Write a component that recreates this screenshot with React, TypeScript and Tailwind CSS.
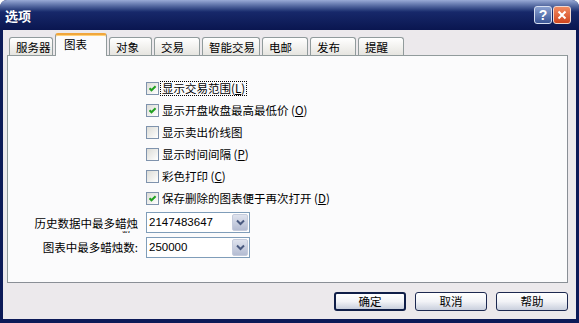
import React from "react";

function Tab({ label, className, active }: { label: string; className: string; active?: boolean }) {
  if (active) {
    return (
      <div
        className={`relative z-10 mb-[-1px] h-[23px] rounded-t-[3px] border border-b-0 border-[#919b9c] border-t-[2px] border-t-[#f0a63c] bg-[#fbfbfc] pl-[8px] pt-[1px] text-[11.5px] leading-[16px] text-black shadow-[inset_0_1px_0_#ffd27a] ${className}`}
      >
        {label}
      </div>
    );
  }
  return (
    <div
      className={`h-[18px] rounded-t-[3px] border border-b-0 border-[#919b9c] bg-gradient-to-b from-white to-[#e6e5e0] pl-[6px] pt-[1px] text-[11.5px] leading-[16px] text-black ${className}`}
    >
      {label}
    </div>
  );
}

function Check({ checked }: { checked?: boolean }) {
  return (
    <div className="flex h-[13px] w-[13px] shrink-0 items-center justify-center border border-[#7f93ad] bg-gradient-to-br from-[#dcdcd7] to-white">
      {checked && (
        <svg width="11" height="11" viewBox="0 0 11 11">
          <path d="M2.5 5.2 L4.5 7.3 L8.6 3.2" fill="none" stroke="#21a121" strokeWidth="2" />
        </svg>
      )}
    </div>
  );
}

function Row({ checked, children, focus }: { checked?: boolean; children: React.ReactNode; focus?: boolean }) {
  return (
    <div className="flex h-[22px] items-center">
      <Check checked={checked} />
      <div
        className={`ml-[2px] px-[1px] text-[11.5px] leading-[13px] text-black ${
          focus ? "outline-1 outline-dotted outline-black" : ""
        }`}
      >
        {children}
      </div>
    </div>
  );
}

function Combo({ value }: { value: string }) {
  return (
    <div className="ml-[8px] flex h-[21px] w-[104px] items-center border border-[#7f9db9] bg-white">
      <div className="flex-1 pl-[2px] text-[11.5px] leading-[13px] text-black font-['Liberation_Sans',sans-serif]">{value}</div>
      <div className="mr-[1px] flex h-[17px] w-[16px] items-center justify-center rounded-[2px] border border-[#c4cbdc] bg-gradient-to-b from-[#dfe3ee] to-[#b4bcd2]">
        <svg width="9" height="7" viewBox="0 0 9 7">
          <path d="M1 1.5 L4.5 5 L8 1.5" fill="none" stroke="#4a5a80" strokeWidth="2" />
        </svg>
      </div>
    </div>
  );
}

function Btn({ label, def }: { label: string; def?: boolean }) {
  return (
    <div
      className={`flex h-[19px] w-[72px] items-center justify-center rounded-[3px] bg-gradient-to-b from-white via-[#f2f3f7] to-[#c9cfdd] text-[11.5px] leading-[13px] text-black ${
        def ? "border-2 border-[#101e48]" : "border border-[#1c2850]"
      }`}
    >
      {label}
    </div>
  );
}

export default function App() {
  return (
    <div className="flex h-[323px] w-[579px] flex-col overflow-hidden rounded-t-[7px] bg-[#0c1a58] font-['Noto_Sans_CJK_SC','Noto_Sans',sans-serif]">
      {/* title bar */}
      <div className="flex h-[30px] shrink-0 items-center justify-between bg-gradient-to-b from-[#9aabd6] via-[#17286a] via-40% to-[#0a1650] pl-[5px] pr-[8px]">
        <div className="text-[13px] font-bold leading-[15px] text-white">选项</div>
        <div className="flex items-center gap-[1px]">
          <div className="flex h-[18px] w-[18px] items-center justify-center rounded-[3px] border border-[#d6def0] bg-gradient-to-b from-[#8aa0d0] to-[#3b5596] text-[14px] font-bold leading-none text-white font-['Liberation_Sans',sans-serif]">
            ?
          </div>
          <div className="flex h-[18px] w-[18px] items-center justify-center rounded-[3px] border border-[#f0d8d0] bg-gradient-to-b from-[#f28a60] to-[#d0441c]">
            <svg width="10" height="10" viewBox="0 0 10 10">
              <path d="M1.5 1.5 L8.5 8.5 M8.5 1.5 L1.5 8.5" stroke="white" strokeWidth="2" />
            </svg>
          </div>
        </div>
      </div>

      {/* body */}
      <div className="mx-[3px] mb-[4px] flex flex-1 flex-col bg-[#ece9ec] pl-[4px] pr-[8px] pt-[3px]">
        <div className="flex h-[22px] items-end gap-[2px] pl-[2px]">
          <Tab label="服务器" className="w-[44px]" />
          <Tab label="图表" className="w-[52px]" active />
          <Tab label="对象" className="w-[43px]" />
          <Tab label="交易" className="w-[46px]" />
          <Tab label="智能交易" className="w-[58px]" />
          <Tab label="电邮" className="w-[46px]" />
          <Tab label="发布" className="w-[46px]" />
          <Tab label="提醒" className="w-[46px]" />
        </div>

        <div className="flex h-[228px] w-[561px] flex-col border border-[#919b9c] border-b-[#8a8f96] border-r-[#8a8f96] bg-[#fbfbfc] pt-[21px]">
          <div className="flex flex-col pl-[138px]">
            <Row checked focus>
              显示交易范围(<span className="underline">L</span>)
            </Row>
            <Row checked>
              显示开盘收盘最高最低价 (<span className="underline">O</span>)
            </Row>
            <Row>显示卖出价线图</Row>
            <Row>
              显示时间间隔 (<span className="underline">P</span>)
            </Row>
            <Row>
              彩色打印 (<span className="underline">C</span>)
            </Row>
            <Row checked>
              保存删除的图表便于再次打开 (<span className="underline">D</span>)
            </Row>
          </div>

          <div className="mt-[3px] flex flex-col gap-[4px]">
            <div className="flex h-[21px] items-center">
              <div className="flex w-[130px] flex-col items-end pt-[4px]">
                <div className="text-[11.5px] leading-[13px] text-black">历史数据中最多蜡烛</div>
                <div className="h-[3px] overflow-hidden pr-[5px] text-[11.5px] leading-[13px] text-black">数</div>
              </div>
              <Combo value="2147483647" />
            </div>
            <div className="flex h-[21px] items-center">
              <div className="w-[130px] text-right text-[11.5px] leading-[13px] text-black">图表中最多蜡烛数:</div>
              <Combo value="250000" />
            </div>
          </div>
        </div>

        <div className="mt-[9px] flex justify-end gap-[9px]">
          <Btn label="确定" def />
          <Btn label="取消" />
          <Btn label="帮助" />
        </div>
      </div>
    </div>
  );
}
